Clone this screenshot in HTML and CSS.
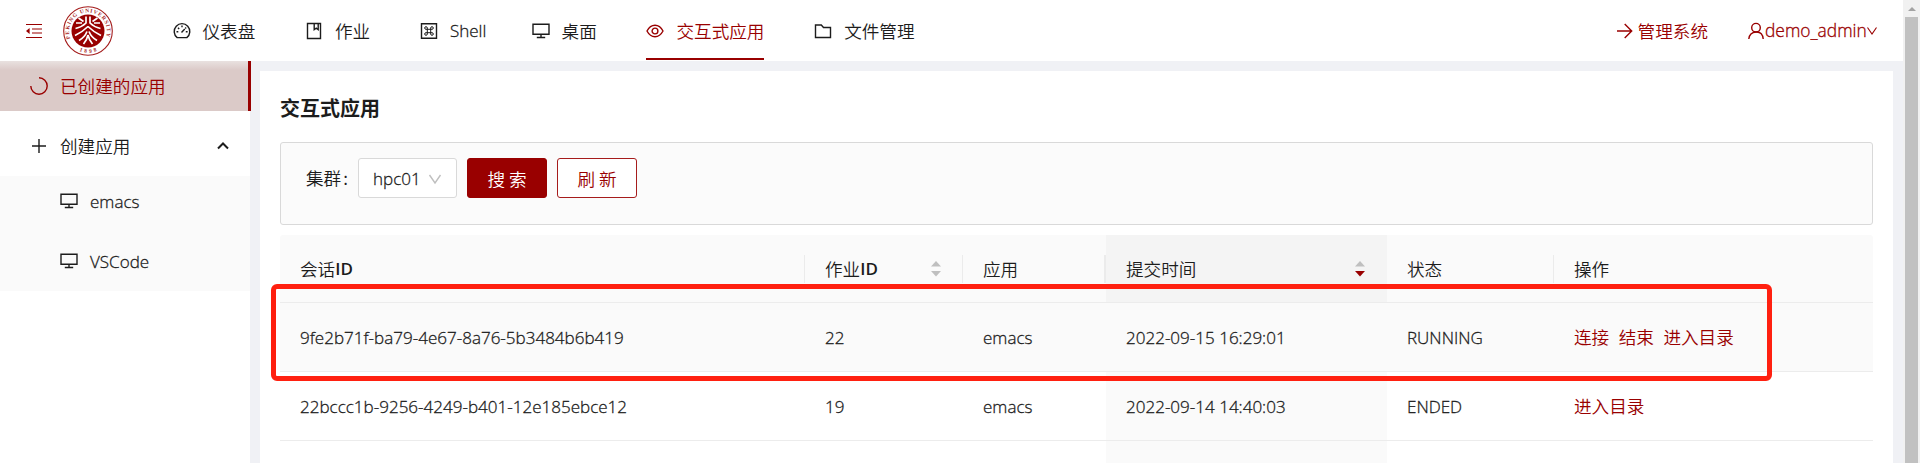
FILE: index.html
```html
<!DOCTYPE html>
<html lang="zh-CN">
<head>
<meta charset="utf-8">
<title>交互式应用</title>
<link rel="stylesheet" href="styles.css">
</head>
<body>
<svg class="defs" width="0" height="0">
  <symbol id="desktop" viewBox="0 0 18 18"><path d="M1 2.2h16v10H1zM9 12.2v3M4.8 15.5h8.4" /></symbol>
</svg>
<div class="page">
  <header class="header">
    <svg class="fold" viewBox="0 0 16 16"><path d="M0 1.500h16M6 6h10M6 10h10M0 14.500h16"/><path class="solid" d="M0 8l3.600-3v6z"/></svg>
    <svg class="logo" viewBox="0 0 50 50">
      <defs>
        <path id="arc-top" d="M7.400 32.500A19 19 0 1 1 42.600 32.500"/>
        <path id="arc-bottom" d="M11 42A22.500 22.500 0 0 0 39 42"/>
      </defs>
      <circle class="ring" cx="25" cy="25" r="24.300"/>
      <circle class="disc" cx="25" cy="25" r="16.500"/>
      <text class="seal"><textPath href="#arc-top" textLength="72">PEKING UNIVERSITY</textPath></text>
      <text class="seal"><textPath href="#arc-bottom" startOffset="6" textLength="18">1898</textPath></text>
      <path class="mark" d="M23 10.500v6.500Q19 21 12.500 22.500M27 10.500v6.500Q31 21 37.500 22.500M15.500 12l5 3.500M34.500 12l-5 3.500M13 17h6M37 17h-6M25 20.500Q20 25.500 12 29.500M25 20.500Q30 25.500 38 29.500M24 25.500Q22 31 16 34.500M26 25.500Q28 31 34 34.500M25 29Q24 34 20.500 38M25 29Q26 34 29.500 38"/>
    </svg>
    <nav class="nav">
      <a class="nav-item"><svg class="icon" viewBox="0 0 18 18"><path d="M4.200 15.600A7.800 7.800 0 1 1 13.800 15.600zM8.500 10.500l3.300-3.500M9 3.500v1.800M3.500 9.800h1.800M12.800 9.800h1.800M5 5.700l1.200 1.200M13.100 5.600l-.8.8"/></svg><span>仪表盘</span></a>
      <a class="nav-item"><svg class="icon" viewBox="0 0 18 18"><path d="M2.500 1.500h13v15h-13zM9.200 1.500v6.200l2-1.500 2 1.500V1.500"/></svg><span>作业</span></a>
      <a class="nav-item shell"><svg class="icon" viewBox="0 0 18 18"><path d="M1.500 1.700h15v14.600h-15z"/><path class="fine" d="M7.300 7.300H6a1.300 1.300 0 1 1 1.300-1.300v6A1.300 1.300 0 1 1 6 10.700h6a1.300 1.300 0 1 1-1.300 1.300V6A1.300 1.300 0 1 1 12 7.300z"/></svg><span class="latin">Shell</span></a>
      <a class="nav-item"><svg class="icon"><use href="#desktop"/></svg><span>桌面</span></a>
      <a class="nav-item active"><svg class="icon" viewBox="0 0 18 18"><path d="M1 9Q4 3.300 9 3.300T17 9Q14 14.700 9 14.700T1 9z"/><circle cx="9" cy="9" r="2.900"/></svg><span>交互式应用</span></a>
      <a class="nav-item"><svg class="icon" viewBox="0 0 18 18"><path d="M1.500 3h5.800l2.200 2.500h7v10h-15z"/></svg><span>文件管理</span></a>
    </nav>
    <a class="admin"><svg class="icon" viewBox="0 0 18 18"><path d="M1 9h14.500M8.700 2l7 7-7 7"/></svg><span>管理系统</span></a>
    <a class="user"><svg class="icon" viewBox="0 0 18 18"><circle cx="9" cy="5.700" r="4.300"/><path d="M1.800 17Q2.500 10.500 9 10t7.200 7"/></svg><span class="latin">demo_admin</span><svg class="caret" viewBox="0 0 12 12"><path d="M1.500 2.500L6 9l4.500-6.500"/></svg></a>
  </header>

  <div class="body">
    <aside class="sider">
      <div class="menu-item selected"><svg class="icon" viewBox="0 0 18 18"><path d="M9 .8A8.200 8.200 0 1 1 .8 9"/></svg><span>已创建的应用</span></div>
      <div class="menu-item parent"><svg class="icon" viewBox="0 0 18 18"><path d="M9 2v14M2 9h14"/></svg><span>创建应用</span><svg class="chevron" viewBox="0 0 12 12"><path d="M1 8.500l5-5 5 5"/></svg></div>
      <div class="submenu">
        <div class="menu-item"><svg class="icon"><use href="#desktop"/></svg><span class="latin">emacs</span></div>
        <div class="menu-item"><svg class="icon"><use href="#desktop"/></svg><span class="latin">VSCode</span></div>
      </div>
    </aside>

    <main class="card">
      <h1 class="title">交互式应用</h1>
      <form class="filter">
        <label class="label">集群<span class="colon">:</span></label>
        <div class="select"><span class="latin">hpc01</span><svg class="caret" viewBox="0 0 14 14"><path d="M1.500 3L7 11l5.500-8"/></svg></div>
        <button type="button" class="btn primary">搜 索</button>
        <button type="button" class="btn">刷 新</button>
      </form>
      <div class="table">
        <div class="row head">
          <div class="cell split">会话<b>ID</b></div>
          <div class="cell split">作业<b>ID</b><svg class="sorter" viewBox="0 0 10 16"><path d="M5 0l5 5.500H0z"/><path d="M5 15.500l5-5.500H0z"/></svg></div>
          <div class="cell split wide">应用</div>
          <div class="cell sorted">提交时间<svg class="sorter" viewBox="0 0 10 16"><path d="M5 0l5 5.500H0z"/><path class="on" d="M5 15.500l5-5.500H0z"/></svg></div>
          <div class="cell split">状态</div>
          <div class="cell">操作</div>
        </div>
        <div class="row hover">
          <div class="cell latin">9fe2b71f-ba79-4e67-8a76-5b3484b6b419</div>
          <div class="cell latin">22</div>
          <div class="cell latin">emacs</div>
          <div class="cell latin sorted">2022-09-15 16:29:01</div>
          <div class="cell latin">RUNNING</div>
          <div class="cell links"><a>连接</a><a>结束</a><a>进入目录</a></div>
        </div>
        <div class="row">
          <div class="cell latin">22bccc1b-9256-4249-b401-12e185ebce12</div>
          <div class="cell latin">19</div>
          <div class="cell latin">emacs</div>
          <div class="cell latin sorted">2022-09-14 14:40:03</div>
          <div class="cell latin">ENDED</div>
          <div class="cell links"><a>进入目录</a></div>
        </div>
        <div class="row">
          <div class="cell"></div><div class="cell"></div><div class="cell"></div><div class="cell sorted"></div><div class="cell"></div><div class="cell"></div>
        </div>
      </div>
    </main>
  </div>
</div>
<div class="scrollbar"><span class="arrow-up"></span><div class="thumb"></div></div>
<div class="highlight"></div>
</body>
</html>
```
FILE: styles.css
```css
* { box-sizing: border-box; }
body {
  margin: 0;
  height: 463px;
  display: flex;
  overflow: hidden;
  position: relative;
  background: #f0f1f5;
  color: #1c1c1c;
  font: 350 17.6px/25px "Noto Sans CJK SC DemiLight", "Noto Sans CJK SC", sans-serif;
}
.defs { position: absolute; }
svg { flex: none; fill: none; stroke: currentColor; stroke-width: 1.4; }
.icon { width: 18px; height: 18px; }
.fine { stroke-width: 1; }
.latin { font-family: "Open Sans", sans-serif; font-size: 17.05px; font-weight: 300; -webkit-text-stroke: 0.3px currentColor; }
.page { width: 1903px; height: 463px; overflow: hidden; }

.header { height: 61px; background: #fff; display: flex; align-items: center; color: #900; }
.fold { width: 16px; height: 16px; margin-left: 26px; stroke-width: 1.2; }
.fold .solid { fill: #900; stroke: none; }
.logo { width: 50px; height: 50px; margin-left: 21px; }
.ring { fill: #fff; stroke: #a41c1c; stroke-width: 1.1; }
.disc { fill: #980000; stroke: none; }
.seal { fill: #a82a2a; stroke: none; font: bold 5.5px "Liberation Serif", serif; }
.mark { stroke: #fff; stroke-width: 1.7; }
.nav { display: flex; height: 61px; margin-left: 59.5px; gap: 49.7px; color: #1c1c1c; }
.nav-item { display: flex; align-items: center; gap: 12px; height: 60px; padding-top: 3px; border-bottom: 2px solid transparent; white-space: nowrap; }
.shell { width: 62px; }
.active { color: #900; border-bottom-color: #900; }
.admin { display: flex; align-items: center; gap: 4px; margin-left: auto; margin-right: 39px; }
.user { display: flex; align-items: center; margin-right: 25px; }
.user .latin { width: 101px; font-size: 17.4px; }
.user .caret { width: 12px; height: 12px; stroke-width: 1.1; }

.body { display: flex; height: 402px; }
.sider { width: 250px; background: #fff; }
.menu-item { display: flex; align-items: center; gap: 12px; height: 50px; padding-left: 30px; }
.menu-item > span { padding-bottom: 1px; }
.menu-item > .latin { padding-bottom: 0; }
.selected { width: 251px; color: #900; background: linear-gradient(#e9e1e0 0, #dbcac8 9px); border-right: 3px solid #900; }
.parent { height: 50px; margin: 10px 0 5px; padding-right: 21px; }
.chevron { width: 12px; height: 12px; margin-left: auto; stroke-width: 2; }
.submenu { background: #fafafa; display: flex; flex-direction: column; gap: 10px; padding-bottom: 5px; }
.submenu .menu-item { padding-left: 60px; }

.card { width: 1633px; margin: 10px 10px 0; padding: 24px 20px 0; background: #fff; }
.title { margin: 0; font-size: 20px; line-height: 25px; font-weight: 700; font-family: "Noto Sans CJK SC", sans-serif; }
.filter { display: flex; gap: 10px; height: 83px; margin: 22px 0 10px; padding: 15px 25px; border: 1px solid #d9d9d9; border-radius: 3px; background: #fbfbfb; }
.label { width: 42px; line-height: 40px; white-space: nowrap; }
.colon { margin-left: 2px; }
.select { width: 99px; height: 40px; border: 1px solid #d9d9d9; border-radius: 3px; background: #fff; display: flex; align-items: center; justify-content: space-between; padding: 1px 14px 0; }
.select .caret { width: 14px; height: 14px; color: #bfbfbf; }
.btn { width: 80px; height: 40px; padding: 0; border: 1px solid #a61c1c; border-radius: 3px; background: #fff; color: #900; font: inherit; }
.primary { background: #900; border-color: #900; color: #fff; }

.row { display: grid; grid-template-columns: 525px 158px 143px 281px 167px 319px; height: 69px; border-bottom: 1px solid #ececec; }
.head { height: 68px; background: #fafafa; border-radius: 3px 3px 0 0; }
.head b { font-family: "Open Sans", sans-serif; font-size: 17px; font-weight: 600; }
.cell { display: flex; align-items: center; padding-left: 20px; white-space: nowrap; }
.split { background: linear-gradient(#ebebeb, #ebebeb) right center / 1px 28px no-repeat; }
.split.wide { background-size: 2px 28px; }
.sorted { background: #fafafa; }
.head .sorted { background: #f4f4f4; }
.hover { background: #fafafa; }
.sorter { width: 10px; height: 16px; margin: 0 22px 0 auto; fill: #bfbfbf; stroke: none; }
.sorter .on { fill: #900; }
.links { gap: 9.5px; padding-bottom: 1px; color: #900; }

.scrollbar { width: 17px; height: 463px; padding: 7px 2px 0; background: #f1f1f1; display: flex; flex-direction: column; align-items: center; gap: 6px; }
.arrow-up { border: 4px solid transparent; border-top: 0; border-bottom-color: #a3a3a3; }
.thumb { width: 13px; flex: 1; background: #c1c1c1; }
.highlight { position: absolute; left: 271px; top: 284px; width: 1501px; height: 97px; border: 5px solid #ff2010; border-radius: 6px; }
```
